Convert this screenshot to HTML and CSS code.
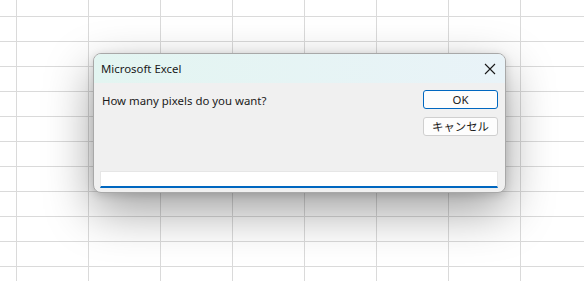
FILE: index.html
```html
<!DOCTYPE html>
<html>
<head>
    <title>Microsoft Excel</title>
    <link rel="stylesheet" href="styles.css">
</head>
<body>
    <div class="sheet">
        <div class="dialog">
            <div class="titlebar">
                <span class="title">Microsoft Excel</span>
                <svg class="close" width="12" height="12" viewBox="0 0 12 12">
                    <path d="M1 1 L11 11 M11 1 L1 11" stroke="#1a1a1a" stroke-width="1.1" fill="none"/>
                </svg>
            </div>
            <div class="content">
                <div class="prompt">How many pixels do you want?</div>
                <div class="buttons">
                    <button class="btn primary">OK</button>
                    <button class="btn">キャンセル</button>
                </div>
                <input class="entry" type="text">
            </div>
        </div>
    </div>
</body>
</html>
```

FILE: styles.css
```css
html, body {
    margin: 0;
    height: 100%;
}
body {
    font-family: "Noto Sans", "Noto Sans CJK JP", sans-serif;
    font-size: 11.4px;
    color: #1a1a1a;
    background-color: #ffffff;
    background-image:
        linear-gradient(to right, #dadada 1px, transparent 1px),
        linear-gradient(to bottom, #dadada 1px, transparent 1px);
    background-size: 72px 25px;
    background-position: 16px 16px;
    overflow: hidden;
}
.sheet {
    padding: 53px 0 0 93px;
}
.dialog {
    width: 413px;
    height: 140px;
    box-sizing: border-box;
    border: 1px solid #a8a8a8;
    border-radius: 8px;
    background: #f0f0f0;
    overflow: hidden;
    display: flex;
    flex-direction: column;
    box-shadow: 0 18px 48px rgba(0, 0, 0, 0.38), 0 2px 8px rgba(0, 0, 0, 0.14);
}
.titlebar {
    height: 29px;
    flex: none;
    display: flex;
    align-items: center;
    justify-content: space-between;
    padding: 0 9px 0 7px;
    background: linear-gradient(to right, #e3f5f1, #e9f3f8);
}
.title {
    font-size: 11.4px;
}
.close {
    display: block;
}
.content {
    flex: 1;
    display: grid;
    grid-template-columns: 1fr 75px;
    grid-template-rows: auto 1fr;
    padding: 7px 7px 4px 6px;
}
.prompt {
    padding: 3px 0 0 2px;
}
.buttons {
    display: flex;
    flex-direction: column;
    gap: 8px;
}
.btn {
    font-family: inherit;
    font-size: 11.4px;
    height: 19px;
    padding: 0;
    line-height: 16px;
    border: 1px solid #cfcfcf;
    border-radius: 3px;
    background: #fdfdfd;
    color: #1a1a1a;
}
.btn.primary {
    border-color: #0067c0;
}
.entry {
    grid-column: 1 / 3;
    align-self: end;
    height: 17px;
    box-sizing: border-box;
    margin: 0;
    border: 1px solid #e6e6e6;
    border-bottom: 2px solid #0067c0;
    background: #ffffff;
    outline: none;
}
```
